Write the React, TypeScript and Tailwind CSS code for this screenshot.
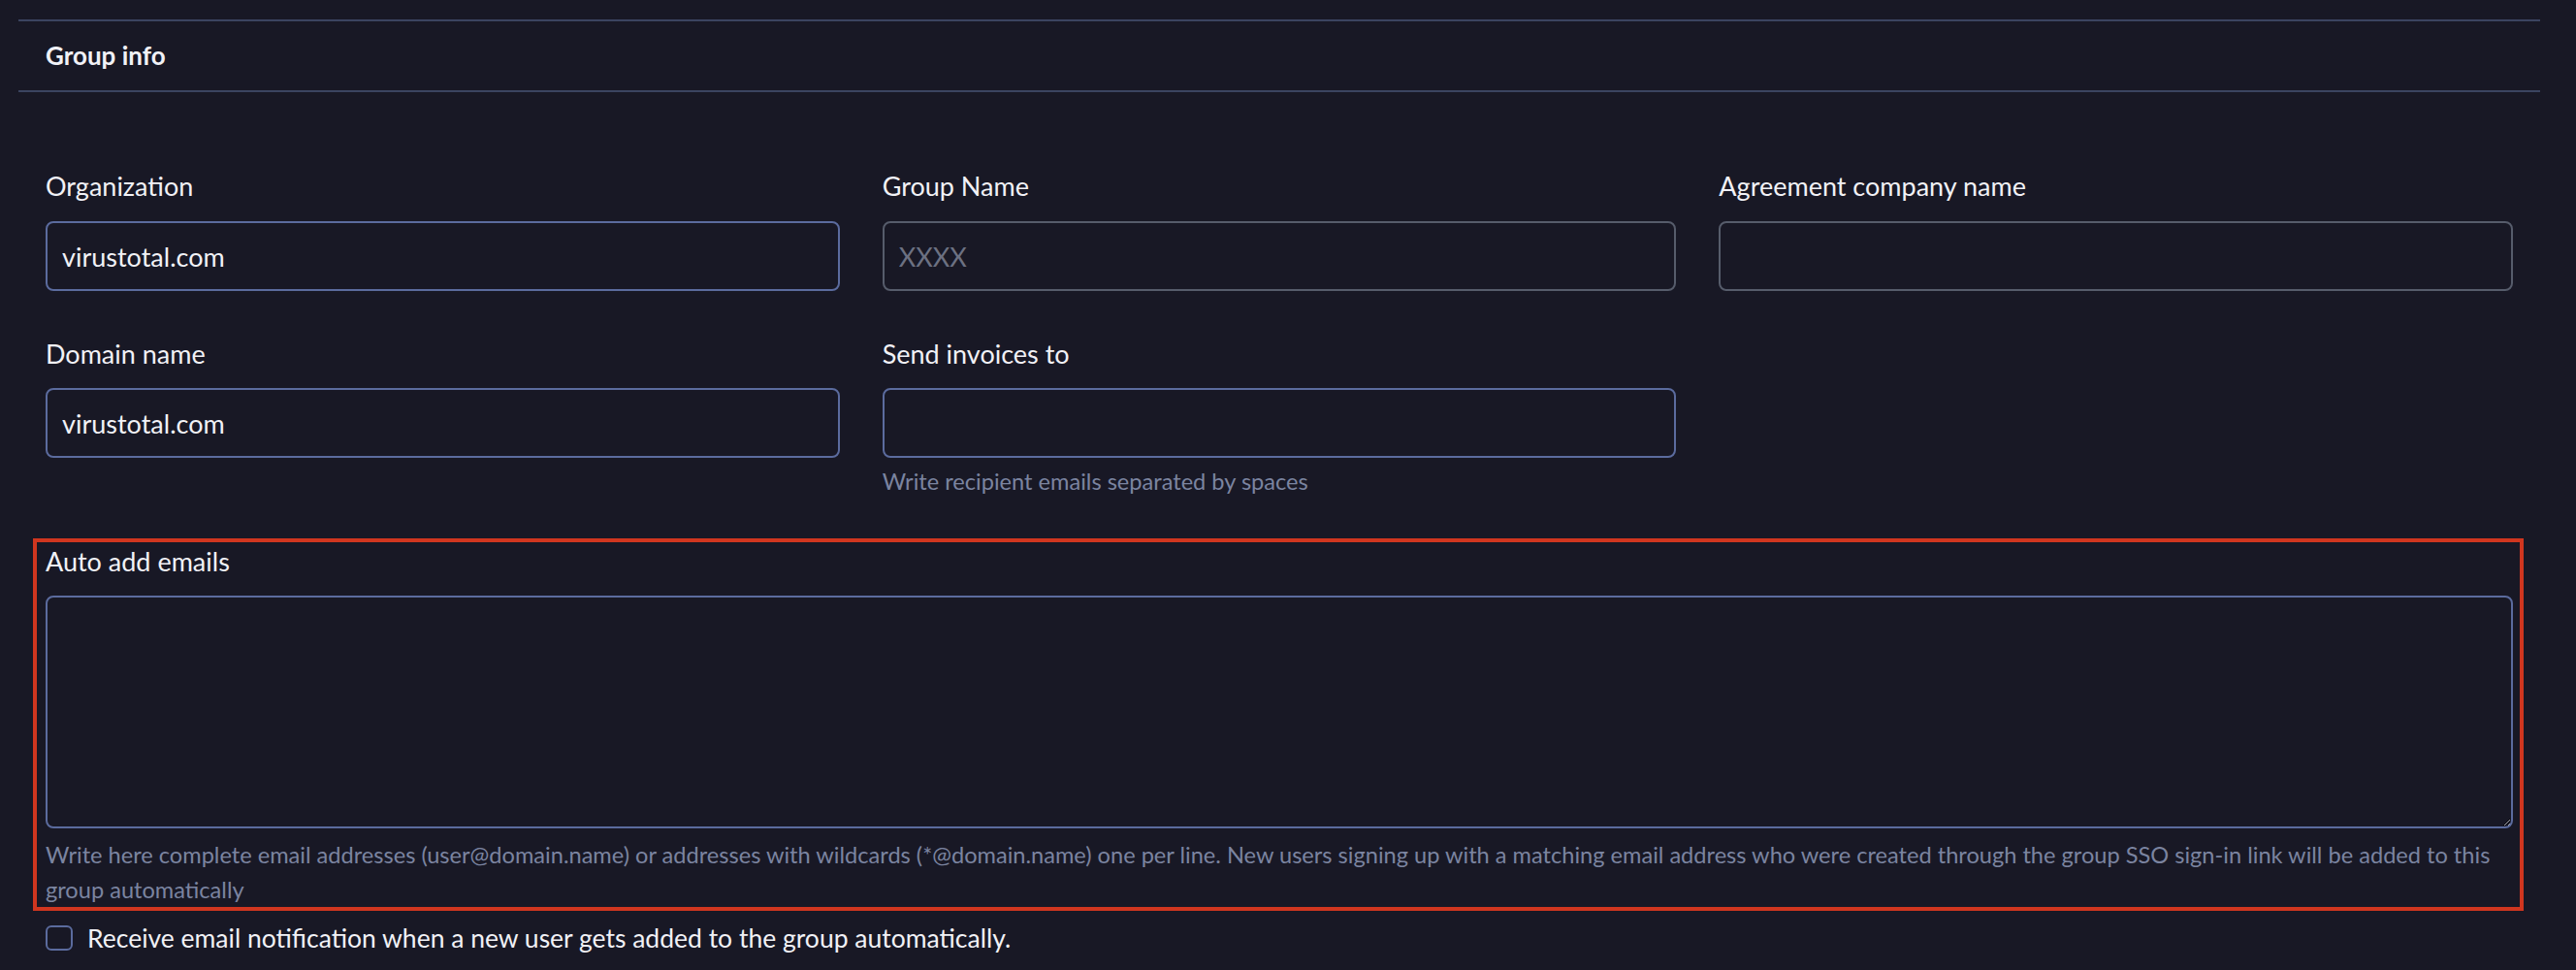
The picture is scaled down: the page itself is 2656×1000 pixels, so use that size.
import React from "react"

const label = "block text-[27px] leading-[36px] text-[#f1f1f6]"
const inputBase =
  "block w-full h-[72px] rounded-[8px] border-2 bg-transparent px-[15px] text-[27px] text-[#f1f1f6] outline-none placeholder:text-[#6c7182]"
const blueBorder = "border-[#5b6b9e]"
const grayBorder = "border-[#565c6b]"
const help = "text-[23.6px] leading-[36px] text-[#7b84a0]"

export default function App() {
  return (
    <div className="min-h-screen bg-[#181825] pt-[20px] pb-[20px] [font-family:Lato,'Noto_Sans',sans-serif] [color-scheme:dark]">
      <div className="ml-[19px] mr-[37px]">
        <div className="flex h-[75px] items-center border-y-2 border-[#3b4460] px-[28px]">
          <h2 className="text-[26px] font-bold text-[#f1f1f6]">Group info</h2>
        </div>

        <div className="px-[28px] pt-[79px]">
          <div className="grid grid-cols-3 gap-x-[44px]">
            <div>
              <label className={label}>Organization</label>
              <input className={`${inputBase} ${blueBorder} mt-[18px]`} defaultValue="virustotal.com" />
            </div>
            <div>
              <label className={label}>Group Name</label>
              <input className={`${inputBase} ${grayBorder} mt-[18px]`} placeholder="XXXX" />
            </div>
            <div>
              <label className={label}>Agreement company name</label>
              <input className={`${inputBase} ${grayBorder} mt-[18px]`} />
            </div>
          </div>

          <div className="mt-[47px] grid grid-cols-3 gap-x-[44px]">
            <div>
              <label className={label}>Domain name</label>
              <input className={`${inputBase} ${blueBorder} mt-[17px]`} defaultValue="virustotal.com" />
            </div>
            <div>
              <label className={label}>Send invoices to</label>
              <input className={`${inputBase} ${blueBorder} mt-[17px]`} />
              <p className={`${help} mt-[6px]`}>Write recipient emails separated by spaces</p>
            </div>
            <div />
          </div>

          <div className="-ml-[13px] -mr-[11px] mt-[41px] border-4 border-[#d0361f] pl-[9px] pr-[7px] pt-[2px]">
            <label className={label}>Auto add emails</label>
            <textarea className={`${inputBase} ${blueBorder} mt-[17px] h-[240px] py-[10px]`} />
            <p className={`${help} mt-[9px]`}>
              Write here complete email addresses (user@domain.name) or addresses with wildcards (*@domain.name) one per line. New users signing up with a matching email address who were created through the group SSO sign-in link will be added to this group automatically
            </p>
          </div>

          <label className="mt-[14px] flex items-center gap-[15px]">
            <input
              type="checkbox"
              className="h-[26px] w-[28px] shrink-0 appearance-none rounded-[6px] border-2 border-[#5b6b9e] bg-transparent"
            />
            <span className="text-[26.5px] leading-[28px] text-[#f1f1f6]">
              Receive email notification when a new user gets added to the group automatically.
            </span>
          </label>
        </div>
      </div>
    </div>
  )
}
